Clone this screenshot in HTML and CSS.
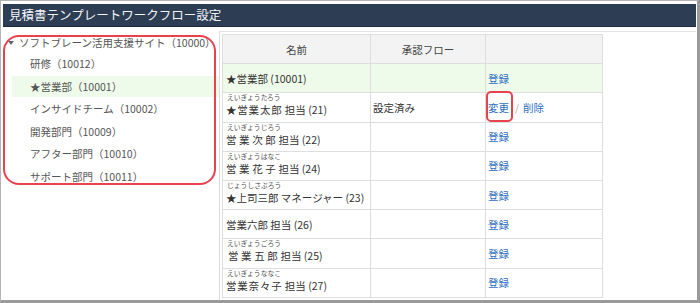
FILE: index.html
```html
<!DOCTYPE html>
<html lang="ja">
<head>
<meta charset="utf-8">
<title>見積書テンプレートワークフロー設定</title>
<link rel="stylesheet" href="styles.css">
</head>
<body>
<div class="frame">
  <div class="titlebar">見積書テンプレートワークフロー設定</div>
  <div class="content">
    <div class="tree">
      <div class="root"><span class="caret"></span>ソフトブレーン活用支援サイト（10000）</div>
      <ul class="children">
        <li>研修（10012）</li>
        <li class="selected">★営業部（10001）</li>
        <li>インサイドチーム（10002）</li>
        <li>開発部門（10009）</li>
        <li>アフター部門（10010）</li>
        <li>サポート部門（10011）</li>
      </ul>
      <div class="annot tree-annot"></div>
    </div>
    <div class="panel">
      <table class="wf">
        <colgroup><col class="c-name"><col class="c-flow"><col class="c-act"></colgroup>
        <thead>
          <tr><th>名前</th><th>承認フロー</th><th></th></tr>
        </thead>
        <tbody>
          <tr class="group">
            <td class="name plain">★営業部 (10001)</td><td></td><td class="act"><a>登録</a></td>
          </tr>
          <tr>
            <td class="name"><div class="furi">えいぎょうたろう</div><div class="nm"><span class="sp1">★営業太郎</span> 担当 (21)</div></td>
            <td class="flow">設定済み</td>
            <td class="act"><span class="edit-wrap"><a>変更</a><span class="annot edit-annot"></span></span><span class="slash">/</span><a>削除</a></td>
          </tr>
          <tr>
            <td class="name"><div class="furi">えいぎょうじろう</div><div class="nm"><span class="sp3">営業次郎</span>担当 (22)</div></td>
            <td></td><td class="act"><a>登録</a></td>
          </tr>
          <tr>
            <td class="name"><div class="furi">えいぎょうはなこ</div><div class="nm"><span class="sp3">営業花子</span>担当 (24)</div></td>
            <td></td><td class="act"><a>登録</a></td>
          </tr>
          <tr>
            <td class="name"><div class="furi">じょうしさぶろう</div><div class="nm">★上司三郎 マネージャー (23)</div></td>
            <td></td><td class="act"><a>登録</a></td>
          </tr>
          <tr>
            <td class="name plain">営業六郎 担当 (26)</td>
            <td></td><td class="act"><a>登録</a></td>
          </tr>
          <tr>
            <td class="name"><div class="furi">えいぎょうごろう</div><div class="nm"><span class="sp3 ind">営業五郎</span>担当 (25)</div></td>
            <td></td><td class="act"><a>登録</a></td>
          </tr>
          <tr>
            <td class="name"><div class="furi">えいぎょうななこ</div><div class="nm"><span class="sp1">営業奈々子</span> 担当 (27)</div></td>
            <td></td><td class="act"><a>登録</a></td>
          </tr>
        </tbody>
      </table>
    </div>
  </div>
</div>
</body>
</html>
```

FILE: styles.css
```css
* { box-sizing: border-box; }
html, body { margin: 0; padding: 0; background: #fff; }
body {
  font-family: "Noto Sans CJK JP", "Noto Sans", sans-serif;
  color: #444;
}
.frame {
  width: 700px;
  height: 303px;
  border-top: 1px solid #b4b4b4;
  border-left: 1px solid #b4b4b4;
  border-right: 3px solid #9a9a9a;
  border-bottom: 3px solid #9a9a9a;
  padding: 3px 1px 0 2px;
  overflow: hidden;
}
.titlebar {
  height: 23px;
  background: #2d3d54;
  border-bottom: 1px solid #1f2c3d;
  color: #f2f4f7;
  font-size: 12.5px;
  line-height: 22px;
  padding-left: 6px;
  white-space: nowrap;
}
.content {
  display: flex;
  margin-top: 4px;
  height: 270px;
}
.tree {
  position: relative;
  width: 216px;
  flex: none;
  padding-top: 2px;
  font-size: 10.5px;
  color: #555;
  white-space: nowrap;
}
.root {
  height: 20px;
  line-height: 20px;
  padding-left: 15px;
  display: flex;
  align-items: center;
}
.caret {
  width: 0; height: 0;
  border-left: 3px solid transparent;
  border-right: 3px solid transparent;
  border-top: 4px solid #666;
  margin-left: -10px;
  margin-right: 5px;
}
.children {
  list-style: none;
  margin: 0;
  padding: 0 0 0 9px;
}
.children li {
  height: 21.6px;
  line-height: 21.6px;
  margin-bottom: 1px;
  padding-left: 18px;
}
.children li.selected { background: #eefaea; }
.annot {
  position: absolute;
  border: 2px solid #e8434c;
  pointer-events: none;
}
.tree-annot {
  left: 0;
  top: 4px;
  width: 213px;
  height: 150px;
  border-radius: 16px;
}
.panel {
  flex: 1;
  border-top: 1px solid #e2e2e2;
  border-left: 1px solid #dcdcdc;
  padding: 2px;
}
.wf {
  border-collapse: collapse;
  width: 380px;
  table-layout: fixed;
  font-size: 10.5px;
  color: #333;
  border: 1px solid #dcdcdc;
}
.c-name { width: 148px; }
.c-flow { width: 115px; }
.c-act { width: 117px; }
.wf th, .wf td {
  border: 1px solid #dedede;
  height: 29.2px;
  padding: 0 3px;
  white-space: nowrap;
}
.wf th {
  background: #f3f3f3;
  font-weight: normal;
  text-align: center;
  color: #444;
}
.wf td { vertical-align: middle; }
.wf tr.group td { background: #effbea; }
.wf td.name { padding-left: 3px; vertical-align: top; padding-top: 0; }
.wf td.name.plain { vertical-align: middle; }
.wf td.flow { padding-left: 2px; }
.furi {
  font-size: 6.8px;
  line-height: 9px;
  color: #555;
  padding-left: 1px;
}
.nm {
  line-height: 15px;
}
.sp1 { letter-spacing: 0.8px; }
.sp3 { letter-spacing: 2.6px; }
.ind { padding-left: 2px; }
.wf td.act { padding-left: 2px; }
.wf a { color: #2f6fc2; text-decoration: none; }
.edit-wrap { position: relative; display: inline-block; }
.edit-annot {
  left: -2px;
  top: -9px;
  width: 27px;
  height: 31px;
  border-radius: 5px;
}
.slash { color: #aaa; margin: 0 4px 0 6px; font-size: 10px; }
```
